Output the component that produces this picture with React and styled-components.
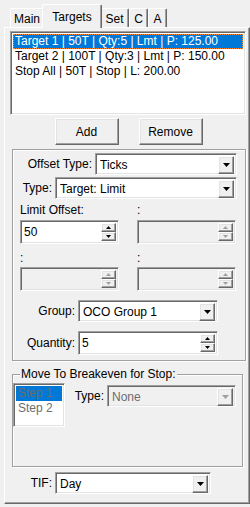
import React from 'react';
import styled, { createGlobalStyle } from 'styled-components';

const GlobalStyle = createGlobalStyle`
  html, body {
    margin: 0;
    padding: 0;
    background: #f0f0f0;
  }
  body {
    font-family: "Liberation Sans", Arial, sans-serif;
    font-size: 12px;
    color: #000;
  }
`;

const Window = styled.div`
  width: 250px;
  height: 507px;
  box-sizing: border-box;
  padding: 4px 0 3px 4px;
  background: #f0f0f0;
  display: flex;
  flex-direction: column;
`;

const TabStrip = styled.div`
  display: flex;
  align-items: flex-end;
  height: 23px;
  padding-left: 6px;
  position: relative;
  z-index: 1;
`;

const Tab = styled.div`
  width: ${p => p.$w}px;
  height: ${p => (p.$active ? 24 : 19)}px;
  margin: ${p => (p.$active ? '0 -2px -1px -2px' : '0')};
  box-sizing: border-box;
  border: 1px solid;
  border-color: #fff #696969 transparent #fff;
  border-bottom: none;
  border-radius: 2px 2px 0 0;
  box-shadow: inset -1px 0 #a0a0a0;
  background: #f0f0f0;
  display: flex;
  align-items: center;
  justify-content: center;
  padding-top: ${p => (p.$active ? 0 : 1)}px;
  z-index: ${p => (p.$active ? 2 : 1)};
`;

const Panel = styled.div`
  flex: 1;
  box-sizing: border-box;
  border: 1px solid;
  border-color: #fff #696969 #696969 #fff;
  box-shadow: inset -1px -1px #a0a0a0;
  padding: 3px 2px 0 5px;
  display: flex;
  flex-direction: column;
`;

const sunken = `
  box-sizing: border-box;
  border: 1px solid;
  border-color: #a0a0a0 #fff #fff #a0a0a0;
  box-shadow: inset 1px 1px #696969, inset -1px -1px #e3e3e3;
`;

const raised = `
  box-sizing: border-box;
  border: 1px solid;
  border-color: #fff #696969 #696969 #fff;
  box-shadow: inset -1px -1px #a0a0a0, inset 1px 1px #e3e3e3;
  background: #f0f0f0;
`;

const ListBox = styled.div`
  ${sunken}
  width: ${p => p.$w}px;
  height: ${p => p.$h}px;
  background: #fff;
  padding: 2px;
  overflow: hidden;
`;

const ListItem = styled.div`
  height: 15px;
  line-height: 15px;
  padding-left: 2px;
  white-space: nowrap;
  box-sizing: border-box;
  color: ${p => (p.$disabled ? '#6d6d6d' : p.$selected ? '#fff' : '#000')};
  background: ${p => (p.$selected ? '#0078d7' : 'transparent')};
  outline: ${p => (p.$focus ? '1px dotted #ff8728' : 'none')};
  outline-offset: -1px;
`;

const ButtonRow = styled.div`
  display: flex;
  justify-content: center;
  gap: 20px;
  margin-top: 3px;
`;

const Button = styled.div`
  ${raised}
  width: 64px;
  height: 27px;
  display: flex;
  align-items: center;
  justify-content: center;
`;

const GroupBox = styled.div`
  width: 234px;
  box-sizing: border-box;
  margin: 4px 0 0 2px;
  border: 1px solid #a0a0a0;
  box-shadow: inset 1px 1px #fff, 1px 1px #fff;
  padding: 3px 7px 5px 0;
  display: flex;
  flex-direction: column;
`;

const FieldSet = styled.fieldset`
  width: 231px;
  box-sizing: border-box;
  margin: 6px 0 0 2px;
  min-width: 0;
  border: 1px solid #a0a0a0;
  box-shadow: inset 1px 1px #fff, 1px 1px #fff;
  padding: 2px 6px 0 0;
  height: 100px;
`;

const Legend = styled.legend`
  margin-left: 7px;
  padding: 0 1px;
  line-height: 14px;
  background: #f0f0f0;
  position: relative;
`;

const FieldRow = styled.div`
  display: grid;
  grid-template-columns: ${p => p.$label}px ${p => p.$field}px;
  column-gap: 3px;
  align-items: center;
  margin-top: ${p => p.$mt || 0}px;
`;

const Label = styled.div`
  text-align: ${p => p.$align || 'right'};
  white-space: nowrap;
  line-height: 14px;
  color: ${p => (p.$disabled ? '#6d6d6d' : '#000')};
`;

const PairRow = styled.div`
  display: grid;
  grid-template-columns: 117px 99px;
  padding-left: 7px;
  margin-top: ${p => p.$mt || 0}px;
`;

const Combo = styled.div`
  ${sunken}
  width: ${p => p.$w}px;
  height: 22px;
  padding: 2px;
  display: flex;
  background: ${p => (p.$disabled ? '#f0f0f0' : '#fff')};
  color: ${p => (p.$disabled ? '#6d6d6d' : '#000')};
`;

const ComboText = styled.div`
  flex: 1;
  padding-left: 2px;
  line-height: 18px;
  white-space: nowrap;
  overflow: hidden;
`;

const DropButton = styled.div`
  ${raised}
  width: 16px;
  height: 18px;
  display: flex;
  align-items: center;
  justify-content: center;
`;

const Spin = styled.div`
  ${sunken}
  width: ${p => p.$w}px;
  height: 24px;
  padding: 2px;
  display: flex;
  background: ${p => (p.$disabled ? '#f0f0f0' : '#fff')};
`;

const SpinText = styled.div`
  flex: 1;
  padding-left: 1px;
  line-height: 18px;
  font-size: 12px;
`;

const SpinButtons = styled.div`
  width: 15px;
  display: flex;
  flex-direction: column;
`;

const SpinButton = styled.div`
  ${raised}
  flex: 1;
  display: flex;
  align-items: center;
  justify-content: center;
`;

const BreakevenRow = styled.div`
  display: flex;
  align-items: flex-start;
`;

const TifRow = styled(FieldRow)`
  margin-top: 5px;
`;

function Arrow({ disabled, up, small }) {
  const w = small ? 5 : 7;
  const h = small ? 3 : 4;
  const pts = up ? `0,${h} ${w / 2},0 ${w},${h}` : `0,0 ${w},0 ${w / 2},${h}`;
  return (
    <svg width={w} height={h} viewBox={`0 0 ${w} ${h}`}>
      <polygon points={pts} fill={disabled ? '#a0a0a0' : '#000'} />
    </svg>
  );
}

function ComboBox({ w, value, disabled }) {
  return (
    <Combo $w={w} $disabled={disabled}>
      <ComboText>{value}</ComboText>
      <DropButton>
        <Arrow disabled={disabled} />
      </DropButton>
    </Combo>
  );
}

function NumericUpDown({ w, value, disabled }) {
  return (
    <Spin $w={w} $disabled={disabled}>
      <SpinText>{value}</SpinText>
      <SpinButtons>
        <SpinButton><Arrow up small disabled={disabled} /></SpinButton>
        <SpinButton><Arrow small disabled={disabled} /></SpinButton>
      </SpinButtons>
    </Spin>
  );
}

const tabs = [
  { name: 'Main', w: 34 },
  { name: 'Targets', w: 60, active: true },
  { name: 'Set', w: 29 },
  { name: 'C', w: 19 },
  { name: 'A', w: 19 },
];

const targets = [
  'Target 1 | 50T | Qty:5 | Lmt | P: 125.00',
  'Target 2 | 100T | Qty:3 | Lmt | P: 150.00',
  'Stop All | 50T | Stop | L: 200.00',
];

export default function App() {
  return (
    <>
      <GlobalStyle />
      <Window>
        <TabStrip>
          {tabs.map(t => (
            <Tab key={t.name} $w={t.w} $active={t.active}>{t.name}</Tab>
          ))}
        </TabStrip>
        <Panel>
          <ListBox $w={236} $h={84}>
            {targets.map((t, i) => (
              <ListItem key={t} $selected={i === 0} $focus={i === 0}>{t}</ListItem>
            ))}
          </ListBox>

          <ButtonRow>
            <Button>Add</Button>
            <Button>Remove</Button>
          </ButtonRow>

          <GroupBox>
            <FieldRow $label={79} $field={142}>
              <Label>Offset Type:</Label>
              <ComboBox w={142} value="Ticks" />
            </FieldRow>
            <FieldRow $label={39} $field={182} $mt={2}>
              <Label>Type:</Label>
              <ComboBox w={182} value="Target: Limit" />
            </FieldRow>
            <PairRow $mt={4}>
              <Label $align="left">Limit Offset:</Label>
              <Label $align="left">:</Label>
            </PairRow>
            <PairRow $mt={3}>
              <NumericUpDown w={99} value="50" />
              <NumericUpDown w={99} disabled />
            </PairRow>
            <PairRow $mt={7}>
              <Label $align="left">:</Label>
              <Label $align="left">:</Label>
            </PairRow>
            <PairRow $mt={2}>
              <NumericUpDown w={99} disabled />
              <NumericUpDown w={99} disabled />
            </PairRow>
            <FieldRow $label={62} $field={140} $mt={9}>
              <Label>Group:</Label>
              <ComboBox w={140} value="OCO Group 1" />
            </FieldRow>
            <FieldRow $label={62} $field={140} $mt={9}>
              <Label>Quantity:</Label>
              <NumericUpDown w={140} value="5" />
            </FieldRow>
          </GroupBox>

          <FieldSet>
            <Legend>Move To Breakeven for Stop:</Legend>
            <BreakevenRow>
              <ListBox $w={53} $h={44}>
                <ListItem $selected $disabled>Step 1</ListItem>
                <ListItem $disabled>Step 2</ListItem>
              </ListBox>
              <FieldRow $label={39} $field={129} $mt={2}>
                <Label>Type:</Label>
                <ComboBox w={129} value="None" disabled />
              </FieldRow>
            </BreakevenRow>
          </FieldSet>

          <TifRow $label={42} $field={156}>
            <Label>TIF:</Label>
            <ComboBox w={156} value="Day" />
          </TifRow>
        </Panel>
      </Window>
    </>
  );
}
